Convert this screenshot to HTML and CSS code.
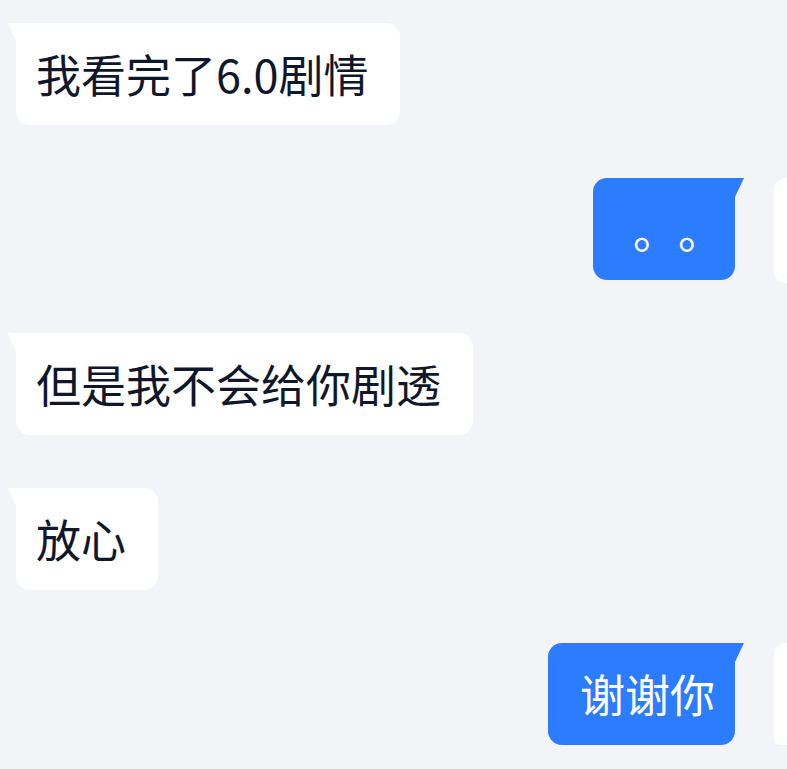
FILE: index.html
```html
<!DOCTYPE html>
<html lang="zh-CN">
<head>
<meta charset="utf-8">
<title>Chat</title>
<link rel="stylesheet" href="styles.css">
</head>
<body>
<div class="chat">
  <div class="row left">
    <div class="bubble">我看完了6.0剧情</div>
  </div>
  <div class="row right">
    <div class="bubble dots">。。</div>
    <div class="avatar"></div>
  </div>
  <div class="row left">
    <div class="bubble">但是我不会给你剧透</div>
  </div>
  <div class="row left">
    <div class="bubble">放心</div>
  </div>
  <div class="row right">
    <div class="bubble">谢谢你</div>
    <div class="avatar"></div>
  </div>
</div>
</body>
</html>
```
FILE: styles.css
```css
html, body {
  margin: 0;
  padding: 0;
  overflow: hidden;
  background: #f3f4f8;
}

.chat {
  display: flex;
  flex-direction: column;
  gap: 53px;
  padding-top: 23px;
  width: 787px;
  font-family: "Noto Sans CJK SC", "Noto Sans", sans-serif;
  font-size: 45px;
  font-weight: 400;
  line-height: 62px;
  text-spacing-trim: space-all;
}

.row {
  display: flex;
  align-items: flex-start;
  height: 102px;
}

.row.left {
  justify-content: flex-start;
  padding-left: 16px;
}

.row.right {
  justify-content: flex-end;
}

.bubble {
  position: relative;
  padding: 20px 32px 20px 20px;
  background: #ffffff;
  color: #11172a;
  border-radius: 0 14px 14px 14px;
  white-space: nowrap;
}

.bubble::before {
  content: "";
  position: absolute;
  top: 0;
  left: -8px;
  width: 8px;
  height: 18px;
  background: inherit;
  clip-path: polygon(0 0, 100% 0, 100% 100%);
}

.right .bubble {
  padding: 20px 20px 20px 32px;
  background: #2c7cff;
  color: #ffffff;
  border-radius: 14px 0 14px 14px;
}

.right .bubble.dots {
  padding: 21px 12px 19px 40px;
}

.right .bubble::before {
  left: auto;
  right: -9px;
  width: 9px;
  height: 19px;
  clip-path: polygon(0 0, 100% 0, 0 100%);
}

.avatar {
  flex: none;
  width: 105px;
  height: 105px;
  margin-left: 39px;
  margin-right: -92px;
  background: #ffffff;
  border-radius: 12px;
}
```
